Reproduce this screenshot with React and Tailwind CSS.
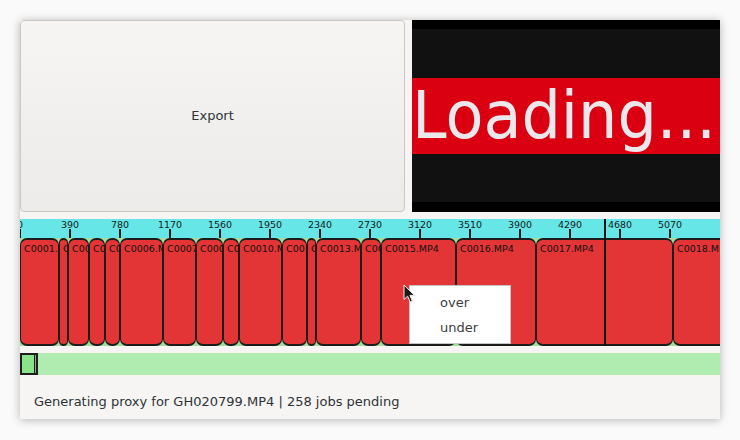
import React from 'react'

const clips = [
  { x: 0, w: 39, name: 'C0001.MP4' },
  { x: 39, w: 9, name: 'C0002.MP4' },
  { x: 48, w: 21, name: 'C0003.MP4' },
  { x: 69, w: 16, name: 'C0004.MP4' },
  { x: 85, w: 15, name: 'C0005.MP4' },
  { x: 100, w: 43, name: 'C0006.MP4' },
  { x: 143, w: 33, name: 'C0007.MP4' },
  { x: 176, w: 27, name: 'C0008.MP4' },
  { x: 203, w: 16, name: 'C0009.MP4' },
  { x: 219, w: 43, name: 'C0010.MP4' },
  { x: 262, w: 25, name: 'C0011.MP4' },
  { x: 287, w: 9, name: 'C0012.MP4' },
  { x: 296, w: 45, name: 'C0013.MP4' },
  { x: 341, w: 20, name: 'C0014.MP4' },
  { x: 361, w: 75, name: 'C0015.MP4' },
  { x: 436, w: 80, name: 'C0016.MP4' },
  { x: 516, w: 137, name: 'C0017.MP4' },
  { x: 653, w: 120, name: 'C0018.MP4' },
]

// one tick every 390 frames, 50px apart
const ticks = Array.from({ length: 14 }, (_, i) => i)

function Cursor() {
  return (
    <svg width="13" height="20" viewBox="0 0 13 20" className="absolute left-[383px] top-[264px]">
      <path d="M1 1 L1 15.5 L4.6 12.2 L7.2 18 L9.4 17 L6.9 11.4 L11.6 11.4 Z" fill="#1a1a1a" stroke="#f0f0f0" strokeWidth="1" strokeLinejoin="round" />
    </svg>
  )
}

export default function App() {
  return (
    <div className="w-[740px] h-[440px] bg-[#fafafa] p-5 font-['DejaVu_Sans',sans-serif]">
      <div className="relative flex h-[399px] w-[700px] flex-col overflow-hidden bg-[#f6f5f4] shadow-[0_1px_9px_rgba(0,0,0,0.28)]">
        {/* top: export button + preview */}
        <div className="flex h-[192px] gap-[7px]">
          <button className="flex w-[385px] items-center justify-center rounded-[4px] border border-[#cdc7c2] bg-gradient-to-b from-[#f6f5f4] to-[#edebe9] text-[13px] text-[#2e3436]">
            Export
          </button>
          <div className="flex flex-1 flex-col overflow-hidden bg-black">
            <div className="mt-[9px] h-[49px] bg-[#111111]" />
            <div className="flex h-[76px] items-center overflow-hidden bg-[#da0012]">
              <span className="origin-left scale-x-[0.94] whitespace-nowrap text-[66px] leading-none text-[#ebe8eb]">Loading...</span>
            </div>
            <div className="h-[48px] bg-[#111111]" />
          </div>
        </div>

        {/* timeline */}
        <div className="relative mt-[7px]">
          <div className="relative h-[19px] overflow-hidden bg-[#67e6e7]">
            {ticks.map((i) => (
              <div key={i}>
                <span className="absolute top-0 -translate-x-1/2 text-[9.5px] leading-[11px] text-[#1a1a1a]" style={{ left: i * 50 }}>
                  {i * 390}
                </span>
                <div className="absolute bottom-0 h-[9px] w-[2px] bg-[#1a1a1a]" style={{ left: i * 50 - 1 }} />
              </div>
            ))}
          </div>
          <div className="relative h-[108px] overflow-hidden bg-[#a3dc9c]">
            {clips.map((c) => (
              <div
                key={c.name}
                className="absolute top-0 bottom-0 overflow-hidden rounded-[7px] border-x border-y-2 border-[#1c1c1c] bg-[#e33535] pl-[3px] pt-[3px] text-[9.5px] leading-[12px] whitespace-nowrap text-[#111]"
                style={{ left: c.x, width: c.w }}
              >
                {c.name}
              </div>
            ))}
          </div>
          <div className="absolute top-0 left-[584px] h-[127px] w-[2px] bg-[#111]" />
        </div>

        {/* proxy progress */}
        <div className="mt-[7px] flex h-[22px] bg-[#b0ecb0]">
          <div className="flex w-[18px] border-2 border-[#1e1e1e] bg-[#88e488]">
            <div className="ml-auto w-[2px] border-l border-[#1e1e1e] bg-[#9a9a9a]" />
          </div>
        </div>

        {/* status */}
        <div className="flex-1 pl-[14px] pt-[19px] text-[13px] leading-[15px] text-[#2e3436]">
          Generating proxy for GH020799.MP4 | 258 jobs pending
        </div>

        {/* context menu */}
        <div className="absolute left-[389px] top-[265px] flex h-[59px] w-[102px] flex-col border border-[#c4c4c4] bg-white pt-[4px] text-[13px] text-[#3c3c3c]">
          <div className="flex h-[25px] items-center pl-[30px]">over</div>
          <div className="flex h-[25px] items-center pl-[30px]">under</div>
        </div>
        <Cursor />
      </div>
    </div>
  )
}
